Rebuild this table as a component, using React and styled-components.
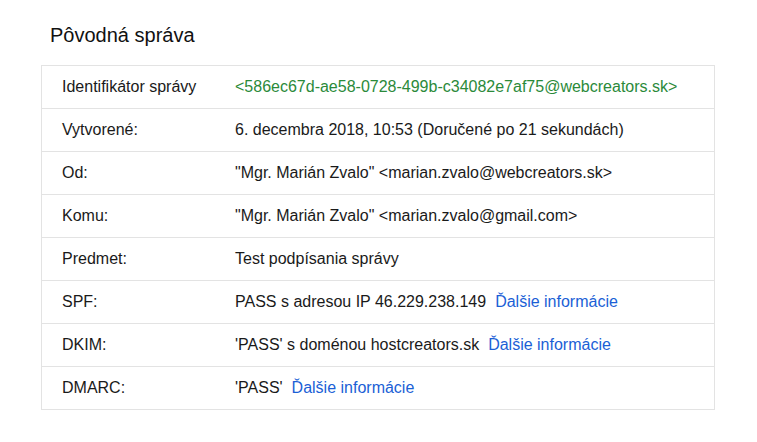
import React from "react";
import styled, { createGlobalStyle } from "styled-components";

const Global = createGlobalStyle`
  html, body { margin: 0; padding: 0; background: #fff; }
  body { font-family: "Liberation Sans", Arial, sans-serif; color: #202020; }
`;

const Page = styled.div`
  padding: 22px 41px 0 41px;
  width: 674px;
`;

const Title = styled.h1`
  margin: 0 0 17px 9px;
  font-size: 20px;
  font-weight: normal;
  line-height: 26px;
  color: #111;
`;

const Table = styled.div`
  border: 1px solid #e3e3e3;
  display: grid;
  grid-template-columns: 193px 1fr;
`;

const Cell = styled.div`
  height: 42px;
  display: flex;
  align-items: center;
  font-size: 16px;
  color: #1a1a1a;
  padding-left: ${(p) => (p.$label ? "20px" : "0")};
  border-top: ${(p) => (p.$first ? "none" : "1px solid #e3e3e3")};
  white-space: pre;
`;

const Green = styled.span`
  color: #2b8a3a;
`;

const Link = styled.a`
  color: #1b5fd6;
  text-decoration: none;
  margin-left: 9px;
`;

const rows = [
  ["Identifikátor správy", <Green>&lt;586ec67d-ae58-0728-499b-c34082e7af75@webcreators.sk&gt;</Green>],
  ["Vytvorené:", "6. decembra 2018, 10:53 (Doručené po 21 sekundách)"],
  ["Od:", "\"Mgr. Marián Zvalo\" <marian.zvalo@webcreators.sk>"],
  ["Komu:", "\"Mgr. Marián Zvalo\" <marian.zvalo@gmail.com>"],
  ["Predmet:", "Test podpísania správy"],
  ["SPF:", <>PASS s adresou IP 46.229.238.149<Link>Ďalšie informácie</Link></>],
  ["DKIM:", <>'PASS' s doménou hostcreators.sk<Link>Ďalšie informácie</Link></>],
  ["DMARC:", <>'PASS'<Link>Ďalšie informácie</Link></>],
];

export default function App() {
  return (
    <Page>
      <Global />
      <Title>Pôvodná správa</Title>
      <Table>
        {rows.map(([l, v], i) => (
          <React.Fragment key={i}>
            <Cell $label $first={i === 0}>{l}</Cell>
            <Cell $first={i === 0}>{v}</Cell>
          </React.Fragment>
        ))}
      </Table>
    </Page>
  );
}
